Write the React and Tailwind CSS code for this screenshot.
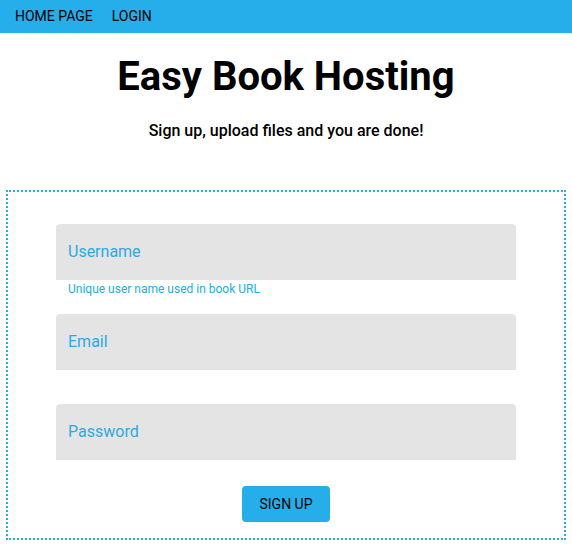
export default function App() {
  const fields = [
    { label: "Username", helper: "Unique user name used in book URL", gap: "h-[34px]" },
    { label: "Email", helper: "", gap: "h-[34px]" },
    { label: "Password", helper: "", gap: "h-[26px]" },
  ];

  return (
    <div className="min-h-screen bg-white font-['Roboto',sans-serif] text-black">
      <nav className="flex h-[33px] items-center gap-[19px] bg-[#25aeea] px-[15px] text-[14px]">
        <span>HOME PAGE</span>
        <span>LOGIN</span>
      </nav>

      <header className="flex flex-col items-center pt-[22px]">
        <h1 className="text-[40px] font-bold leading-[44px]">Easy Book Hosting</h1>
        <p className="mt-[22px] text-[16px] font-medium leading-[20px]">
          Sign up, upload files and you are done!
        </p>
      </header>

      <form className="mx-[6px] mt-[49px] flex flex-col border-2 border-dotted border-[#25aeea] px-[48px] pb-[16px] pt-[32px]">
        {fields.map((f) => (
          <div key={f.label}>
            <div className="flex h-[56px] items-center rounded-t-[4px] bg-[#e4e4e4] px-[12px] text-[16px] text-[#2aaae5]">
              {f.label}
            </div>
            <div className={`${f.gap} px-[12px] pt-[2px]`}>
              {f.helper && (
                <p className="text-[12px] leading-[14px] text-[#2aaae5]">{f.helper}</p>
              )}
            </div>
          </div>
        ))}
        <div className="flex justify-center">
          <button
            type="button"
            className="h-[36px] w-[88px] rounded-[4px] bg-[#25aeea] text-[14px]"
          >
            SIGN UP
          </button>
        </div>
      </form>
    </div>
  );
}
